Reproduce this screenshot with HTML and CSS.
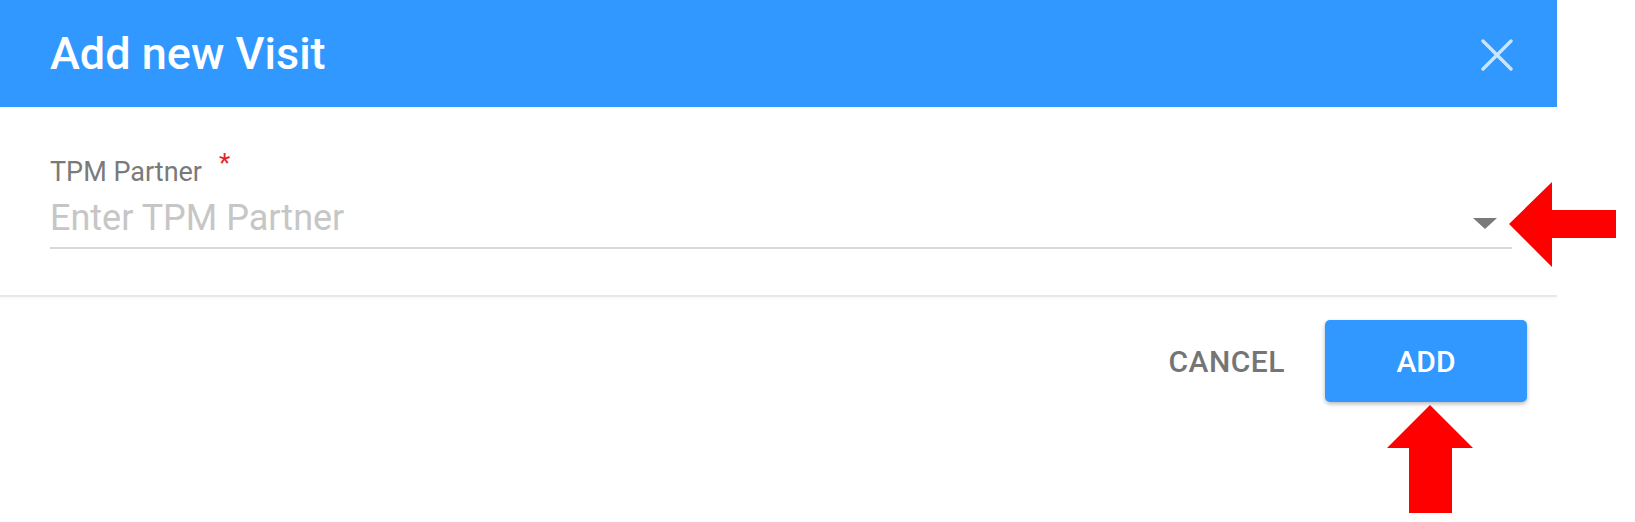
FILE: index.html
```html
<!DOCTYPE html>
<html>
    <head>
        <meta name="viewport" content="width=device-width"/>
        <title>Add new Visit</title>
        <link rel="stylesheet" href="styles.css">
    </head>
    <body>
        <div class="dialog">
            <div class="dialog-header">
                <h2 class="dialog-title">Add new Visit</h2>
                <svg class="close-icon" width="32" height="32" viewBox="0 0 32 32">
                    <path d="M2 2 L30 30 M30 2 L2 30" stroke="#fff" stroke-width="3.4" stroke-linecap="round"/>
                </svg>
            </div>

            <div class="dialog-content">
                <label class="field-label">TPM Partner<span class="required">*</span></label>
                <div class="field-input">
                    <span class="placeholder">Enter TPM Partner</span>
                    <!-- arrow-drop-down -->
                    <svg class="drop-icon" width="24" height="12" viewBox="0 0 24 12">
                        <polygon points="0,0 24,0 12,11" fill="#7a7a7a"/>
                    </svg>
                </div>
            </div>

            <div class="dialog-buttons">
                <button class="btn btn-cancel">Cancel</button>
                <button class="btn btn-add">Add</button>
            </div>
        </div>

        <!-- 标注箭头 -->
        <svg class="mark mark-left" width="115" height="93" viewBox="0 0 115 93">
            <polygon points="4,46 47,4 47,32 111,32 111,60 47,60 47,89" fill="#ff0000"/>
        </svg>
        <svg class="mark mark-up" width="94" height="116" viewBox="0 0 94 116">
            <polygon points="47,4 90,47 69,47 69,112 26,112 26,47 4,47" fill="#ff0000"/>
        </svg>
    </body>
</html>
```

FILE: styles.css
```css
html, body {
    margin: 0;
    padding: 0;
}
body {
    position: relative;
    width: 1635px;
    height: 522px;
    overflow: hidden;
    background: #fff;
    font-family: Roboto, "Noto Sans", sans-serif;
}

.dialog {
    width: 1557px;
    background: #fff;
}

.dialog-header {
    display: flex;
    align-items: center;
    justify-content: space-between;
    height: 107px;
    padding: 0 44px 0 50px;
    background: #3098ff;
}
.dialog-title {
    margin: 0;
    font-size: 45px;
    font-weight: 500;
    color: #fff;
    line-height: 1;
}
.close-icon {
    opacity: .75;
    margin-top: 2px;
}

.dialog-content {
    padding: 41px 45px 46px 50px;
}
.field-label {
    display: block;
    font-size: 27px;
    line-height: 30px;
    color: #7a7a7a;
}
.required {
    margin-left: 17px;
    font-size: 26px;
    color: #e32626;
    vertical-align: 9px;
}
.field-input {
    display: flex;
    align-items: flex-start;
    justify-content: space-between;
    margin-top: 10px;
    padding-bottom: 8px;
    border-bottom: 2px solid #d9d9d9;
}
.placeholder {
    font-size: 36px;
    line-height: 42px;
    color: #c6c6c6;
}
.drop-icon {
    margin: 21px 15px 0 0;
}

.dialog-buttons {
    display: flex;
    justify-content: flex-end;
    align-items: center;
    padding: 23px 30px 0 0;
    border-top: 2px solid #e8e8e8;
    box-shadow: inset 0 3px 3px -2px rgba(0, 0, 0, .04);
}
.btn {
    height: 82px;
    border: 0;
    border-radius: 5px;
    font-family: Roboto, "Noto Sans", sans-serif;
    font-size: 30px;
    font-weight: 500;
    text-transform: uppercase;
    cursor: pointer;
}
.btn-cancel {
    padding: 0 20px;
    margin-right: 20px;
    background: transparent;
    color: #757575;
    letter-spacing: .5px;
}
.btn-add {
    width: 202px;
    background: #3098ff;
    color: #fff;
    box-shadow: 0 2px 4px rgba(0, 0, 0, .28);
}

.mark {
    position: absolute;
}
.mark-left {
    left: 1505px;
    top: 178px;
}
.mark-up {
    left: 1383px;
    top: 401px;
}
```
